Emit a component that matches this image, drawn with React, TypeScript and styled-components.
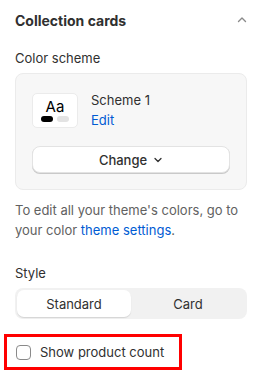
import React from "react";
import styled, { createGlobalStyle } from "styled-components";

const GlobalStyle = createGlobalStyle`
  body {
    margin: 0;
    background: #fff;
    font-family: Inter, "Noto Sans", sans-serif;
    color: #303030;
    -webkit-font-smoothing: antialiased;
  }
`;

const Page = styled.div`
  width: 264px;
  padding: 0 17px 0 15px;
  box-sizing: border-box;
`;

const Header = styled.div`
  height: 40px;
  display: flex;
  align-items: center;
  justify-content: space-between;
`;

const Title = styled.h2`
  margin: 0;
  font-size: 14px;
  font-weight: 650;
  color: #303030;
`;

const Chevron = styled.svg`
  width: 12px;
  height: 12px;
  margin-right: -1px;
`;

const Label = styled.div<{ $top?: number }>`
  margin-top: ${(p) => p.$top ?? 0}px;
  font-size: 13px;
  line-height: 20px;
  color: #303030;
`;

const Panel = styled.div`
  margin-top: 5px;
  background: #f7f7f7;
  border: 1px solid #ebebeb;
  border-radius: 8px;
  padding: 16px;
  display: flex;
  flex-direction: column;
  gap: 16px;
`;

const SchemeRow = styled.div`
  display: flex;
  align-items: center;
  gap: 13px;
`;

const Swatch = styled.div`
  width: 46px;
  height: 35px;
  box-sizing: border-box;
  background: #fff;
  border: 1px solid #ebebeb;
  border-radius: 5px;
  display: flex;
  flex-direction: column;
  align-items: center;
  justify-content: center;
  gap: 1px;
`;

const Aa = styled.span`
  font-size: 15px;
  line-height: 16px;
  color: #000;
`;

const Dots = styled.div`
  display: flex;
  gap: 4px;
`;

const Dot = styled.span<{ $color: string }>`
  width: 12px;
  height: 6px;
  border-radius: 3px;
  background: ${(p) => p.$color};
`;

const SchemeText = styled.div`
  display: flex;
  flex-direction: column;
  font-size: 13px;
  line-height: 20px;
`;

const Link = styled.a`
  color: #005bd3;
  text-decoration: none;
`;

const ChangeButton = styled.button`
  height: 27px;
  width: 100%;
  background: #fff;
  border: 1px solid #e3e3e3;
  border-radius: 8px;
  box-shadow: 0 1px 0 #c9c9c9;
  font-family: inherit;
  font-size: 13px;
  font-weight: 500;
  color: #303030;
  display: flex;
  align-items: center;
  justify-content: center;
  gap: 6px;
  padding: 0;
`;

const Help = styled.p`
  margin: 10px 0 0;
  font-size: 13px;
  line-height: 20px;
  color: #616161;
`;

const Segmented = styled.div`
  margin-top: 5px;
  background: #f1f1f1;
  border-radius: 8px;
  padding: 2px;
  display: grid;
  grid-template-columns: 1fr 1fr;
`;

const Segment = styled.div<{ $active?: boolean }>`
  height: 27px;
  display: flex;
  align-items: center;
  justify-content: center;
  font-size: 13px;
  color: #303030;
  border-radius: 7px;
  background: ${(p) => (p.$active ? "#fff" : "transparent")};
  box-shadow: ${(p) => (p.$active ? "0 1px 1px rgba(0,0,0,0.12)" : "none")};
`;

const Highlight = styled.div`
  margin: 15px 0 0 -11px;
  width: fit-content;
  display: flex;
  align-items: center;
  gap: 9px;
  box-sizing: border-box;
  height: 36px;
  border: 3px solid #ff0000;
  padding: 0 15px 0 9px;
`;

const Checkbox = styled.span`
  width: 15px;
  height: 15px;
  box-sizing: border-box;
  border: 1px solid #8a8a8a;
  border-radius: 4px;
  background: #fff;
`;

const CheckLabel = styled.span`
  font-size: 13px;
  color: #303030;
`;

export default function App() {
  return (
    <>
      <GlobalStyle />
      <Page>
        <Header>
          <Title>Collection cards</Title>
          <Chevron viewBox="0 0 12 12" fill="none">
            <path d="M2.5 7.5 6 4l3.5 3.5" stroke="#8a8a8a" strokeWidth="1.4" strokeLinecap="round" strokeLinejoin="round" />
          </Chevron>
        </Header>

        <Label $top={8}>Color scheme</Label>
        <Panel>
          <SchemeRow>
            <Swatch>
              <Aa>Aa</Aa>
              <Dots>
                <Dot $color="#000" />
                <Dot $color="#e3e3e3" />
              </Dots>
            </Swatch>
            <SchemeText>
              <span>Scheme 1</span>
              <Link>Edit</Link>
            </SchemeText>
          </SchemeRow>
          <ChangeButton>
            Change
            <svg width="10" height="10" viewBox="0 0 10 10" fill="none">
              <path d="M2 3.5 5 6.5l3-3" stroke="#303030" strokeWidth="1.3" strokeLinecap="round" strokeLinejoin="round" />
            </svg>
          </ChangeButton>
        </Panel>
        <Help>
          To edit all your theme's colors, go to your color <Link>theme settings</Link>.
        </Help>

        <Label $top={23}>Style</Label>
        <Segmented>
          <Segment $active>Standard</Segment>
          <Segment>Card</Segment>
        </Segmented>

        <Highlight>
          <Checkbox />
          <CheckLabel>Show product count</CheckLabel>
        </Highlight>
      </Page>
    </>
  );
}
